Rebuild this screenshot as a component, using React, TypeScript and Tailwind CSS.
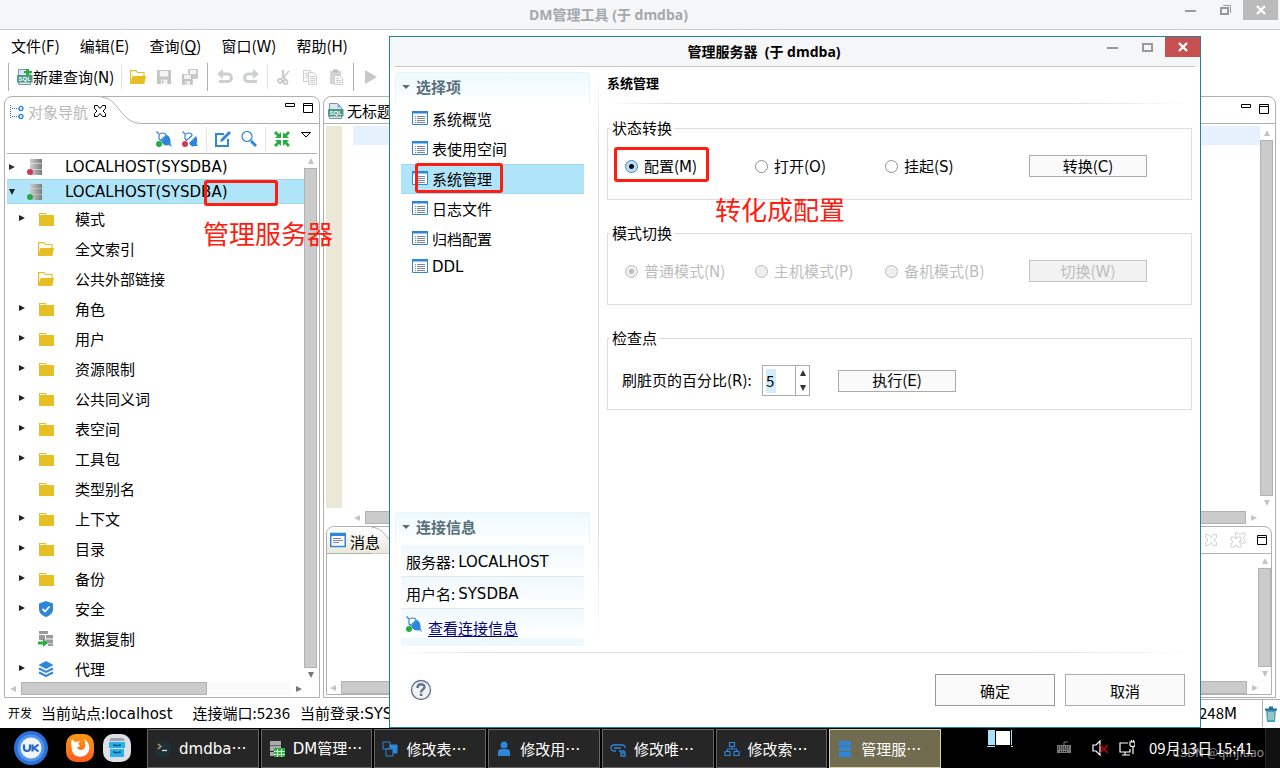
import React from 'react';
import clsx from 'clsx';

const CJK = "font-['Noto_Sans_CJK_SC',sans-serif]";
const LATIN = "font-['DejaVu_Sans',sans-serif]";

// Chinese runs keep the CJK face for digits and brackets, letters use DejaVu
const T: React.FC<{ children: string }> = ({ children }) => (
  <span className="whitespace-nowrap">
    {children.split(/([A-Za-z]+)/).map((part, i) =>
      i % 2 ? (
        <span key={i} className={LATIN}>
          {part}
        </span>
      ) : (
        part
      ),
    )}
  </span>
);

/* ---------- icons ---------- */

const Folder = () => (
  <svg className="size-4 shrink-0" viewBox="0 0 16 16">
    <path d="M1 2h7v2h8v11H1z" fill="#e6bf25" />
    <path d="M2 3h5v1H2z" fill="#fff" />
  </svg>
);

const FolderOpen = () => (
  <svg className="size-4 shrink-0" viewBox="0 0 16 16">
    <path d="M.6 14V1.6H6L7.4 3.5H14V8" fill="none" stroke="#e6bf25" strokeWidth="1.2" />
    <path d="M2.5 7H16l-1.6 8H0z" fill="#e6bf25" />
  </svg>
);

const Server: React.FC<{ color: string }> = ({ color }) => (
  <svg className="size-4 shrink-0" viewBox="0 0 16 16">
    <defs>
      <linearGradient id="metal">
        <stop offset="0" stopColor="#cfcfcf" />
        <stop offset="1" stopColor="#7d7d7d" />
      </linearGradient>
    </defs>
    <path d="M3 0h12v4.500H3zM3 5h12v5H3zM3 10.500h12V16H3z" fill="url(#metal)" />
    <circle cx="3" cy="13" r="3" fill={color} />
  </svg>
);

const Shield = () => (
  <svg className="size-4 shrink-0" viewBox="0 0 16 16">
    <path d="M8 0l7 2.500V8c0 4-3 6.500-7 8-4-1.500-7-4-7-8V2.500z" fill="#2d86d9" />
    <path d="M4.500 8l2.500 2.500 4.500-5" fill="none" stroke="#fff" strokeWidth="1.800" />
  </svg>
);

const Replicate = () => (
  <svg className="size-4 shrink-0" viewBox="0 0 16 16">
    <path d="M1 0h9v3H1zM1 4h6v5H1zM8 4h7v3.500H8zM7 8.500h8V12H9zM10 12.500h5V15h-5z" fill="#9a9a9a" />
    <path d="M0 10.500h5V8l5 4-5 4v-2.500H0z" fill="#27ad3d" />
  </svg>
);

const Layers = () => (
  <svg className="size-4 shrink-0" viewBox="0 0 16 16">
    <path d="M8 0l7.500 4L8 8 .5 4z" fill="#2d86d9" />
    <path d="M1 7.500l7 3.500 7-3.500M1 11.500L8 15l7-3.500" fill="none" stroke="#2d86d9" strokeWidth="2" />
  </svg>
);

const Plug: React.FC<{ dot: string; off?: boolean }> = ({ dot, off }) => (
  <svg className="size-4 shrink-0" viewBox="0 0 16 16">
    <path d="M.5.5L3 3" stroke="#2d86d9" strokeWidth="1.200" />
    <path d="M3 8V4.500C3 3 5 2 6.500 2c2 0 3.500 1 3.500 2.500L4.500 9.500z" fill="#fff" stroke="#2d86d9" strokeWidth="1.200" />
    {off ? (
      <>
        <path d="M6.500 7.500l3-2.500" stroke="#2d86d9" />
        <path d="M7 12l7-7c1.500 2.500 1.500 6 .5 8l1.500 2h-3c-2 1-5 0-6-3z" fill="#2d86d9" />
      </>
    ) : (
      <path d="M5 10l6-6c2.500 1.500 4 4 3.500 8.500L16 16l-3-2c-3 1-6 .500-8-4z" fill="#2d86d9" />
    )}
    <circle cx="3" cy="13" r="3" fill={dot} />
  </svg>
);

const SqlFile: React.FC<{ plus?: boolean }> = ({ plus }) => (
  <svg className="size-4 shrink-0" viewBox="0 0 16 16">
    <path d="M1.500.500h8l4 4v11h-12z" fill="#dbe6f3" stroke="#7f93ab" />
    <path d="M9.500.500v4h4z" fill="#8fa9cf" />
    <path d="M0 6h15.500v7.500H0z" fill="#4e9a86" />
    <text x="1.500" y="12" fontSize="6" fontWeight="700" fill="#fff" fontFamily="Liberation Sans">
      SQL
    </text>
    {plus && <path d="M9 0h3v2h3v2h-3v2H9V4H7V2h2z" fill="#27ad3d" />}
  </svg>
);

const Save: React.FC<{ all?: boolean }> = ({ all }) => (
  <svg className="size-4" viewBox="0 0 16 16">
    {all && (
      <>
        <path d="M6 0h10v10H6z" fill="#cbcbcb" />
        <path d="M8 1h6v4H8z" fill="#f4f4f4" />
      </>
    )}
    <g transform={all ? 'translate(0 5) scale(.72)' : 'translate(1 1) scale(.94)'}>
      <path d="M0 0h15v15H0z" fill="#c4c4c4" />
      <path d="M3 1h9v6H3zM4 10h7v5H4z" fill="#f4f4f4" />
      <path d="M5 11h2v3H5z" fill="#c4c4c4" />
    </g>
  </svg>
);

const UndoArrow: React.FC<{ flip?: boolean }> = ({ flip }) => (
  <svg className={clsx('size-4', flip && '-scale-x-100')} viewBox="0 0 16 16" fill="none">
    <path d="M5 5h6c4.500 0 4.500 7.500 0 7.500H2" stroke="#cdd0d0" strokeWidth="3" />
    <path d="M0 5l6-5v10z" fill="#cdd0d0" />
  </svg>
);

const Cut = () => (
  <svg className="size-4" viewBox="0 0 16 16" fill="none" stroke="#c9c9c9">
    <path d="M7 1v7l3 3" strokeWidth="2" />
    <path d="M13 2L8 8l-3 2" strokeWidth="1.500" />
    <circle cx="4" cy="12" r="2" strokeWidth="1.800" />
    <circle cx="9.500" cy="13" r="2" strokeWidth="1.800" />
  </svg>
);

const CopyPages = () => (
  <svg className="size-4" viewBox="0 0 16 16" fill="#fafafa" stroke="#cfcfcf">
    <path d="M1.500 1.500h7v11h-7z" />
    <path d="M6.500 3.500h5l3 3v9h-8z" />
    <path d="M3 4.500h3M3 6.500h3M3 8.500h3M8 7.500h5M8 9.500h5M8 11.500h5M8 13.500h5" />
  </svg>
);

const Paste = () => (
  <svg className="size-4" viewBox="0 0 16 16">
    <path d="M2 2h11v13H2z" fill="#d3d3d3" />
    <path d="M5 .500h5v3H5z" fill="#bdbdbd" />
    <path d="M6.500 6.500h5l3 3v6h-8z" fill="#fafafa" stroke="#cfcfcf" />
    <path d="M8 9.500h3M8 11.500h5M8 13.500h5" stroke="#cfcfcf" />
  </svg>
);

const NavTree = () => (
  <svg className="size-4 shrink-0" viewBox="0 0 16 16">
    <path d="M1.500 1v14M3 4.500h7M3 12.500h7" fill="none" stroke="#2d6fb5" strokeDasharray="1 1" />
    <circle cx="12" cy="4.500" r="2" fill="none" stroke="#2d86d9" strokeWidth="1.300" />
    <circle cx="12" cy="12.500" r="2" fill="none" stroke="#2d86d9" strokeWidth="1.300" />
  </svg>
);

const ListIcon = () => (
  <svg className="mb-0.5 size-4 shrink-0" viewBox="0 0 16 16">
    <path d="M.5 1.500h15v13H.5z" fill="#fff" stroke="#2d86d9" />
    <path d="M0 1h16v2.500H0z" fill="#2d86d9" />
    <path d="M3 6.500h1M5 6.500h8M3 8.500h1M5 8.500h8M3 10.500h1M5 10.500h8M3 12.500h1M5 12.500h8" stroke="#7c879b" />
  </svg>
);

const MessageIcon = () => (
  <svg className="mb-1 size-4 shrink-0" viewBox="0 0 16 16">
    <path d="M.75 1.500h14.500v13H.75z" fill="#fff" stroke="#2d86d9" strokeWidth="1.500" />
    <path d="M0 1h16v3H0z" fill="#2d86d9" />
    <path d="M3 6.500h8M3 8.500h10M3 10.500h6" stroke="#7c879b" />
  </svg>
);

const CloseOutline: React.FC<{ className?: string }> = ({ className }) => (
  <svg className={clsx('size-3.5', className)} viewBox="0 0 14 14" fill="#fff" stroke="currentColor">
    <path d="M1.500 1.500h3L7 4.500l2.500-3h3v3L10 7l2.500 2.500v3h-3L7 9.500l-2.500 3h-3v-3L4 7 1.500 4.500z" />
  </svg>
);

const Tri: React.FC<{ dir: 'up' | 'down' | 'left' | 'right'; className?: string }> = ({ dir, className }) => {
  const paths = {
    up: 'M4 1l3 6H1z',
    down: 'M1 1h6L4 7z',
    left: 'M7 1v6L1 4z',
    right: 'M1 1l6 3-6 3z',
  };
  return (
    <svg className={clsx('size-2 shrink-0', className)} viewBox="0 0 8 8">
      <path d={paths[dir]} fill="currentColor" />
    </svg>
  );
};

const MinMax: React.FC<{ min?: boolean }> = ({ min = true }) => (
  <svg className="h-3 w-8 shrink-0" viewBox="0 0 32 12" fill="none" stroke="#000">
    {min && <path d="M1.500 1.500h9v3h-9z" />}
    <path d="M19.500 1.500h9v9h-9zM19.500 3.500h9" />
  </svg>
);

const CrossIcon = () => (
  <svg className="size-2.5" viewBox="0 0 10 10">
    <path d="M1 1l8 8M9 1L1 9" stroke="#fff" strokeWidth="2.400" />
  </svg>
);

/* ---------- scroll bars ---------- */

const VScroll: React.FC<{ down?: string }> = ({ down = 'text-[#c4c4c4]' }) => (
  <div className="flex w-[13px] shrink-0 flex-col items-center">
    <Tri dir="up" className="my-[3px] text-[#c4c4c4]" />
    <div className="w-full flex-1 border border-[#b2b2b2] bg-[#cbcbcb]" />
    <Tri dir="down" className={clsx('my-[3px]', down)} />
  </div>
);

const HScroll: React.FC<{ thumb?: string; right?: string }> = ({ thumb = 'w-full', right = 'text-[#c4c4c4]' }) => (
  <div className="flex h-[13px] shrink-0 items-center gap-1">
    <Tri dir="left" className="text-[#c4c4c4]" />
    <div className="flex h-full flex-1 bg-[#fafafa]">
      <div className={clsx('h-full border border-[#b2b2b2] bg-[#cbcbcb]', thumb)} />
    </div>
    <Tri dir="right" className={right} />
  </div>
);

/* ---------- main window ---------- */

const TitleBar = () => (
  <header className="flex h-[30px] shrink-0 items-start border-b border-[#c9c9c9] bg-[#f5f6f7] text-[#a5a8aa]">
    <div className="w-9" />
    <h1 className="flex-1 text-center font-['Open_Sans','Noto_Sans_CJK_SC',sans-serif] text-[14px] leading-[30px] font-bold">
      DM管理工具 (于 dmdba)
    </h1>
    <svg className="mt-1 h-3 w-[62px]" viewBox="0 0 62 12" fill="none" stroke="#999">
      <path d="M4 7h11" strokeWidth="2" />
      <path d="M40 4h7v6h-7z" strokeWidth="2" />
      <path d="M42 1.500h7.500V9" />
    </svg>
    <button aria-label="关闭" className="mr-0.5 flex h-5 w-[35px] items-center justify-center bg-[#bababa]">
      <CrossIcon />
    </button>
  </header>
);

const MenuBar = () => (
  <nav className="flex h-8 shrink-0 items-center gap-5 pl-[11px]">
    <button><T>文件(F)</T></button>
    <button><T>编辑(E)</T></button>
    <button>查询(<u className={clsx(LATIN, 'underline-offset-2')}>Q</u>)</button>
    <button><T>窗口(W)</T></button>
    <button><T>帮助(H)</T></button>
  </nav>
);

const ToolButton: React.FC<{ label: string; children: React.ReactNode }> = ({ label, children }) => (
  <button aria-label={label} className="flex h-6 w-[26px] shrink-0 items-center justify-center text-[#c4c4c4]">
    {children}
  </button>
);

const Bar = () => <div className="mx-1 h-7 w-px shrink-0 bg-[#b0b0b0]" />;
const Sep = () => <div className="mx-[3px] h-6 w-px shrink-0 bg-[#e2e2e2]" />;

const ToolBar = () => (
  <div className="flex h-[34px] shrink-0 items-center pb-1 pl-1">
    <Bar />
    <button className="mr-1 ml-1 flex h-6 items-center">
      <SqlFile plus />
      <T>新建查询(N)</T>
    </button>
    <Sep />
    <ToolButton label="打开"><FolderOpen /></ToolButton>
    <ToolButton label="保存"><Save /></ToolButton>
    <ToolButton label="全部保存"><Save all /></ToolButton>
    <Bar />
    <ToolButton label="撤销"><UndoArrow /></ToolButton>
    <ToolButton label="重做"><UndoArrow flip /></ToolButton>
    <Sep />
    <ToolButton label="剪切"><Cut /></ToolButton>
    <ToolButton label="复制"><CopyPages /></ToolButton>
    <ToolButton label="粘贴"><Paste /></ToolButton>
    <Bar />
    <ToolButton label="执行">
      <svg className="size-4" viewBox="0 0 16 16"><path d="M2 1l12 7-12 7z" fill="#c4c9c6" /></svg>
    </ToolButton>
  </div>
);

const treeItems = [
  { name: '模式', arrow: true, icon: <Folder /> },
  { name: '全文索引', arrow: false, icon: <FolderOpen /> },
  { name: '公共外部链接', arrow: false, icon: <FolderOpen /> },
  { name: '角色', arrow: true, icon: <Folder /> },
  { name: '用户', arrow: true, icon: <Folder /> },
  { name: '资源限制', arrow: true, icon: <Folder /> },
  { name: '公共同义词', arrow: true, icon: <Folder /> },
  { name: '表空间', arrow: true, icon: <Folder /> },
  { name: '工具包', arrow: true, icon: <Folder /> },
  { name: '类型别名', arrow: false, icon: <Folder /> },
  { name: '上下文', arrow: true, icon: <Folder /> },
  { name: '目录', arrow: true, icon: <Folder /> },
  { name: '备份', arrow: true, icon: <Folder /> },
  { name: '安全', arrow: true, icon: <Shield /> },
  { name: '数据复制', arrow: false, icon: <Replicate /> },
  { name: '代理', arrow: true, icon: <Layers /> },
];

const Navigator = () => (
  <aside className="flex w-[316px] shrink-0 flex-col rounded-t-lg border border-[#b0b0b0]">
    <div className="flex h-[27px] shrink-0">
      <div className="flex w-[97px] items-center gap-[3px] pt-0.5 pl-1 whitespace-nowrap text-[#b9b9b9]">
        <NavTree />
        对象导航
        <CloseOutline className="mb-0.5 ml-0.5 size-3 shrink-0 text-black" />
      </div>
      <svg className="h-[27px] w-11 shrink-0" viewBox="0 0 44 27" fill="none" stroke="#b0b0b0">
        <path d="M0 .5C16 0 18 26.500 40 26.500h4" />
      </svg>
      <div className="flex flex-1 justify-end border-b border-[#b0b0b0] pt-[5px] pr-[3px]">
        <MinMax />
      </div>
    </div>
    <div className="mx-0.5 flex h-[30px] shrink-0 items-center justify-end border-b border-[#b0b0b0]">
      <ToolButton label="连接"><Plug dot="#27ad3d" /></ToolButton>
      <ToolButton label="断开"><Plug dot="#d03a4e" off /></ToolButton>
      <Sep />
      <ToolButton label="编辑">
        <svg className="size-4" viewBox="0 0 16 16" fill="none" stroke="#2d86d9">
          <path d="M9 3H1v12h12V8" strokeWidth="2" />
          <path d="M5 11l1-3 8-8 2 2-8 8z" fill="#2d86d9" stroke="none" />
        </svg>
      </ToolButton>
      <ToolButton label="查找">
        <svg className="size-4" viewBox="0 0 16 16" fill="none" stroke="#2d86d9">
          <circle cx="6" cy="5.500" r="5" strokeWidth="1.200" />
          <path d="M10 10l5 5" strokeWidth="2.800" />
        </svg>
      </ToolButton>
      <Sep />
      <ToolButton label="折叠">
        <svg className="size-4" viewBox="0 0 16 16" fill="#27ad3d">
          <path d="M7 7H1l2-2-3-3 2-2 3 3 2-2zM9 7V1l2 2 3-3 2 2-3 3 2 2zM7 9v6l-2-2-3 3-2-2 3-3-2-2zM9 9h6l-2 2 3 3-2 2-3-3-2 2z" />
        </svg>
      </ToolButton>
      <button aria-label="菜单" className="flex w-[22px] justify-center pb-2">
        <svg className="h-1.5 w-2.5" viewBox="0 0 10 6" fill="#fff" stroke="#000"><path d="M.5.5h9L5 5z" /></svg>
      </button>
    </div>
    <div className="ml-0.5 flex min-h-0 flex-1 pr-0.5">
      <ul className="min-w-0 flex-1 overflow-hidden">
        <li className="flex h-[25px] items-center pl-px">
          <Tri dir="right" className="text-[#333]" />
          <span className="mr-[22px] ml-[11px]"><Server color="#d03a4e" /></span>
          <span className={LATIN}>LOCALHOST(SYSDBA)</span>
        </li>
        <li className="flex h-[25px] items-center border-y border-[#9fdcf2] bg-[#b0e5f9] pl-px">
          <Tri dir="down" className="text-[#222]" />
          <span className="mr-[22px] ml-[11px]"><Server color="#27ad3d" /></span>
          <span className={LATIN}>LOCALHOST(SYSDBA)</span>
        </li>
        {treeItems.map(item => (
          <li key={item.name} className="flex h-[30px] items-center pl-[11px]">
            <Tri dir="right" className={clsx('mb-0.5 text-[#222]', !item.arrow && 'invisible')} />
            <span className="mr-[21px] ml-3">{item.icon}</span>
            {item.name}
          </li>
        ))}
      </ul>
      <VScroll down="text-[#777]" />
    </div>
    <div className="mb-0.5 pr-4 pl-1"><HScroll thumb="w-[186px]" right="text-[#777]" /></div>
  </aside>
);

const Editor = () => (
  <main className="flex min-w-0 flex-1 flex-col rounded-t-lg border border-[#b0b0b0]">
    <div className="flex h-[27px] shrink-0 items-center gap-[3px] border-b border-[#b0b0b0] pt-0.5 pr-[3px] pl-1 whitespace-nowrap">
      <SqlFile />
      <span className="flex-1">无标题</span>
      <span className="pb-1"><MinMax /></span>
    </div>
    <div className="flex min-h-0 flex-1 pt-0.5 pr-0.5 pl-0.5">
      <div className="flex min-w-0 flex-1 flex-col">
        <div className="flex flex-1">
          <div className="w-4 bg-[#ebe8d8]" />
          <div className="ml-[11px] h-[19px] flex-1 bg-[#e7f1fe]" />
        </div>
        <div className="mt-[3px] mr-0.5 mb-0.5 pl-[27px]"><HScroll /></div>
      </div>
      <div className="flex pb-4"><VScroll /></div>
    </div>
    <section className="mr-[3px] mb-0.5 ml-0.5 flex h-[169px] shrink-0 flex-col rounded-t-lg border border-[#b0b0b0]">
      <div className="flex h-[27px] shrink-0 border-b border-[#b0b0b0]">
        <div className="relative z-10 flex w-[45px] items-center gap-1 rounded-tl-lg bg-linear-to-b from-white to-[#ebe8d8] pt-1 pl-[3px] whitespace-nowrap">
          <MessageIcon />
          消息
        </div>
        <svg className="h-[27px] w-11 shrink-0" viewBox="0 0 44 27">
          <defs>
            <linearGradient id="tab" x2="0" y2="1">
              <stop offset="0" stopColor="#fff" />
              <stop offset="1" stopColor="#ebe8d8" />
            </linearGradient>
          </defs>
          <path d="M0 .5C16 0 18 26.500 40 26.500H0z" fill="url(#tab)" />
          <path d="M0 .5C16 0 18 26.500 40 26.500h4" fill="none" stroke="#b0b0b0" />
        </svg>
        <div className="flex flex-1 items-center justify-end gap-3 pr-px text-[#d0d0d0]">
          <CloseOutline />
          <svg className="size-4" viewBox="0 0 16 16" fill="#fff" stroke="currentColor">
            <path d="M5 1h3l2 2 2-2h3v3l-2 2 2 2v3h-3L9 8 6 6z" />
            <path d="M1 5h3l2 2 2-2h3v3L9 10l2 2v3H8l-2-2-2 2H1v-3l2-2-2-2z" />
          </svg>
          <span className="-ml-5"><MinMax min={false} /></span>
        </div>
      </div>
      <div className="flex min-h-0 flex-1 flex-col">
        <div className="flex min-h-0 flex-1 justify-end"><VScroll /></div>
        <div className="mr-3 ml-0.5"><HScroll /></div>
      </div>
    </section>
  </main>
);

const StatusBar = () => (
  <footer className="flex h-[30px] shrink-0 items-center pl-2 whitespace-nowrap">
    <span className="mr-[9px] text-[12px]">开发</span>
    <span className="mr-5"><T>当前站点:localhost</T></span>
    <span className="mr-2.5">连接端口:5236</span>
    <T>当前登录:SYSDBA</T>
    <div className="ml-auto flex h-7 items-center border-t border-[#b0b0b0]">
      <span className="w-[63px]"><T>248M</T></span>
      <span className="h-full w-px bg-[#b0b0b0]" />
      <svg className="mr-0.5 ml-px h-4 w-3.5" viewBox="0 0 14 16">
        <path d="M2 4h10l-1 12H3z" fill="#4fa3b8" />
        <path d="M5 6v8M7 6v8M9 6v8" stroke="#d6efcf" />
        <path d="M1 3.500h12M5 1.500h4" stroke="#1f6f9a" strokeWidth="2" />
      </svg>
    </div>
  </footer>
);

/* ---------- dialog ---------- */

const pages = ['系统概览', '表使用空间', '系统管理', '日志文件', '归档配置', 'DDL'];

const SectionHeader: React.FC<{ title: string }> = ({ title }) => (
  <h3 className="flex h-8 items-center gap-1.5 rounded-t border border-b-0 border-[#e2f6fb] bg-linear-to-b from-[#eefaff] to-white pb-1 pl-1.5 font-bold text-[#58707a]">
    <svg className="h-1 w-2" viewBox="0 0 8 4"><path d="M0 0h8L4 4z" fill="#58707a" /></svg>
    {title}
  </h3>
);

const FadeLine: React.FC<{ className?: string }> = ({ className }) => (
  <div className={clsx('h-px bg-[linear-gradient(90deg,transparent,#dedede_12%,#dedede_80%,transparent)]', className)} />
);

const PushButton: React.FC<{ label: string; disabled?: boolean; className?: string }> = ({
  label,
  disabled,
  className,
}) => (
  <button
    disabled={disabled}
    className={clsx(
      'flex h-[22px] w-[118px] items-center justify-center border border-[#ababab] bg-[#fafafa] disabled:border-[#c4c4c4] disabled:bg-[#f2f2f2] disabled:text-[#bdbdbd]',
      className,
    )}
  >
    <T>{label}</T>
  </button>
);

const RadioRow: React.FC<{ name: string; options: string[]; action: string; disabled?: boolean }> = ({
  name,
  options,
  action,
  disabled,
}) => (
  <div className="flex h-[22px] items-center pl-[15px]">
    {options.map((option, i) => (
      <label key={option} className={clsx('flex w-[130px] shrink-0 items-center gap-1.5', disabled && 'text-[#bdbdbd]')}>
        <input
          type="radio"
          name={name}
          defaultChecked={i === 0}
          disabled={disabled}
          className="size-[13px] shrink-0 appearance-none rounded-full border border-[#8f8f8f] bg-white checked:border-[#4a86c0] checked:bg-[radial-gradient(circle,#111_0_2px,#bddcf8_3px)] disabled:border-[#bdbdbd] disabled:bg-[#eee] disabled:checked:bg-[radial-gradient(circle,#bdbdbd_0_2px,#eee_3px)]"
        />
        <T>{option}</T>
      </label>
    ))}
    <PushButton label={action} disabled={disabled} className="ml-3.5" />
  </div>
);

const Group: React.FC<{ title: string; children: React.ReactNode }> = ({ title, children }) => (
  <fieldset className="mb-[23px] h-[82px] border border-[#dcdcdc] px-0.5">
    <legend className="px-0.5 leading-5">{title}</legend>
    <div className="pt-[17px]">{children}</div>
  </fieldset>
);

const ServerDialog = () => (
  <div
    role="dialog"
    aria-labelledby="dialog-title"
    className="absolute top-9 bottom-10 left-[389px] flex w-[812px] flex-col border border-[#2a7e98] bg-white"
  >
    <div className="flex h-[30px] shrink-0 items-start bg-[#f5f6f7]">
      <div className="ml-[5px] flex h-[30px] flex-1 border-b border-[#c9c9c9]">
        <h2
          id="dialog-title"
          className="flex-1 pl-[30px] text-center font-['Open_Sans','Noto_Sans_CJK_SC',sans-serif] text-[14px] leading-[30px] font-bold whitespace-pre"
        >
          管理服务器  (于 dmdba)
        </h2>
        <svg className="mt-1 h-3 w-[62px]" viewBox="0 0 62 12" fill="none" stroke="#999" strokeWidth="2">
          <path d="M4 7h11M40 3h9v7h-9z" />
        </svg>
      </div>
      <div className="mr-[5px] h-[30px] w-[30px] border-b border-[#c9c9c9]">
        <button aria-label="关闭" className="flex h-5 w-[35px] items-center justify-center bg-[#c75050]">
          <CrossIcon />
        </button>
      </div>
    </div>

    <div className="flex flex-1">
      <div className="flex w-[200px] shrink-0 flex-col pt-[5px] pb-1.5 pl-[5px]">
        <SectionHeader title="选择项" />
        <ul className="mr-1.5 ml-1.5">
          {pages.map(page => (
            <li
              key={page}
              className={clsx(
                'flex items-center gap-1 border-y pl-[11px]',
                page === 'DDL' ? 'h-[25px]' : 'h-[30px]',
                page === '系统管理' ? 'border-[#9fdcf2] bg-[#b0e5f9]' : 'border-transparent',
              )}
            >
              <ListIcon />
              <T>{page}</T>
            </li>
          ))}
        </ul>
        <div className="mt-auto">
          <SectionHeader title="连接信息" />
          <div className="mx-1.5 mt-px">
            <p className="flex h-8 items-center gap-[3px] border-b border-[#e4e9ec] bg-linear-to-b from-[#f0f9fe] to-white pt-0.5 pl-[5px]">
              服务器: <span className={LATIN}>LOCALHOST</span>
            </p>
            <p className="flex h-8 items-center gap-[3px] border-b border-[#e4e9ec] bg-linear-to-b from-[#f0f9fe] to-white pt-0.5 pl-[5px]">
              用户名: <span className={LATIN}>SYSDBA</span>
            </p>
            <p className="flex h-[37px] items-center gap-1.5 border-b-8 border-[#eef9fe] bg-linear-to-b from-[#f0f9fe] to-white pl-[5px]">
              <Plug dot="#27ad3d" />
              <a href="#connection" className="pt-2 text-[#00007f] underline underline-offset-2">
                查看连接信息
              </a>
            </p>
          </div>
        </div>
      </div>

      <div className="mt-[5px] mb-1.5 ml-2 w-px bg-[linear-gradient(transparent,#dedede_12%,#dedede_80%,transparent)]" />

      <div className="flex-1 px-2">
        <h3 className="mb-1 h-8 text-[13px] leading-8 font-bold">系统管理</h3>
        <FadeLine className="mb-3.5" />
        <Group title="状态转换">
          <RadioRow name="state" options={['配置(M)', '打开(O)', '挂起(S)']} action="转换(C)" />
        </Group>
        <Group title="模式切换">
          <RadioRow name="mode" options={['普通模式(N)', '主机模式(P)', '备机模式(B)']} action="切换(W)" disabled />
        </Group>
        <Group title="检查点">
          <div className="flex items-center pl-3">
            <label htmlFor="percent" className="w-[140px] shrink-0"><T>刷脏页的百分比(R):</T></label>
            <div className="flex h-[31px] w-12 border border-[#ababab]">
              <div className="flex flex-1 items-center border-r border-[#ababab] pl-[3px]">
                <input id="percent" defaultValue="5" className="h-6 w-2.5 bg-[#d3ecfb] outline-none" />
              </div>
              <div className="flex w-[13px] flex-col text-[#333]">
                <button aria-label="增加" className="flex flex-1 items-center justify-center"><Tri dir="up" /></button>
                <button aria-label="减少" className="flex flex-1 items-center justify-center"><Tri dir="down" /></button>
              </div>
            </div>
            <PushButton label="执行(E)" className="ml-7" />
          </div>
        </Group>
      </div>
    </div>

    <FadeLine className="mx-[5px]" />
    <div className="flex h-[74px] shrink-0 items-center gap-2.5 pr-[15px] pl-5">
      <button aria-label="帮助" className="mr-auto">
        <svg className="size-[22px]" viewBox="0 0 22 22" fill="none" stroke="#66738f">
          <circle cx="11" cy="11" r="9.500" fill="#f1f2f6" strokeWidth="1.400" />
          <path d="M7.500 9c0-5 7-4.500 7-1 0 2.500-3.500 2.500-3.500 5.500" strokeWidth="2.400" />
          <path d="M9.800 15.800h2.600" strokeWidth="2.400" />
        </svg>
      </button>
      <button className="h-8 w-[120px] border border-[#999] bg-[#fafafa] pt-0.5">确定</button>
      <button className="h-8 w-[120px] border border-[#ababab] bg-[#fafafa] pt-0.5">取消</button>
    </div>
  </div>
);

/* ---------- task bar ---------- */

const tasks = [
  {
    name: 'dmdba…',
    icon: (
      <svg className="size-4 shrink-0" viewBox="0 0 16 16">
        <rect width="16" height="16" rx="5" fill="#1c3038" />
        <path d="M3 3l3 2.500L3 8" fill="none" stroke="#e8924a" strokeWidth="1.300" />
        <path d="M7 9.500h5" stroke="#ddd" strokeWidth="1.300" />
      </svg>
    ),
  },
  {
    name: 'DM管理…',
    icon: (
      <svg className="size-4 shrink-0" viewBox="0 0 16 16">
        <path d="M1 0h11v4.500H1zM1 5h11v5H1zM1 11h5v4H1z" fill="#aaa" />
        <path d="M5 7h11v9H5z" fill="#27ad3d" />
        <path d="M5 10.500h11M5 13.500h11M8.500 8v8M12.500 8v8" stroke="#d9f2dd" />
      </svg>
    ),
  },
  {
    name: '修改表…',
    icon: (
      <svg className="size-4 shrink-0" viewBox="0 0 16 16" fill="none" stroke="#2d86d9">
        <path d="M1 1h7v7H1z" />
        <path d="M8 4h7v8H8z" fill="#2d86d9" />
        <path d="M4 8h7v7H4z" fill="#262626" />
      </svg>
    ),
  },
  {
    name: '修改用…',
    icon: (
      <svg className="size-4 shrink-0" viewBox="0 0 16 16" fill="#2d86d9">
        <circle cx="8" cy="4" r="3.500" />
        <path d="M2 15v-4c0-2 2-3 3-3h6c1 0 3 1 3 3v4z" />
      </svg>
    ),
  },
  {
    name: '修改唯…',
    icon: (
      <svg className="size-4 shrink-0" viewBox="0 0 16 16" fill="none" stroke="#2d86d9" strokeWidth="1.300">
        <path d="M6 10H4C0 10 0 4 4 4h8c2.500 0 3.500 1.500 3 3M4 7h7" />
        <path d="M9 10h4c2 0 2 1 2 5h-4v-3h4" />
      </svg>
    ),
  },
  {
    name: '修改索…',
    icon: (
      <svg className="size-4 shrink-0" viewBox="0 0 16 16" fill="none" stroke="#2d86d9" strokeWidth="1.200">
        <path d="M5.500 1.500h5v4h-5zM1 10.500h5v4H1zM10 10.500h5v4h-5zM8 5.500V8M3.500 10.500V8h9v2.500" />
      </svg>
    ),
  },
  {
    name: '管理服…',
    icon: (
      <svg className="size-4 shrink-0" viewBox="0 0 16 16" fill="#2d86d9">
        <path d="M2 0h12v4.500H2zM2 5.500h12V10H2zM2 11h12v5H2z" />
      </svg>
    ),
  },
];

const TaskBar = () => (
  <div className="flex h-10 shrink-0 items-center bg-black text-white">
    <div className="flex w-[147px] shrink-0 items-center pl-3.5">
      <svg className="mr-[18px] size-[34px]" viewBox="0 0 34 34">
        <circle cx="17" cy="17" r="17" fill="#2c6fd6" />
        <circle cx="17" cy="17" r="13.500" fill="#4f95ee" />
        <circle cx="17" cy="17" r="10.500" fill="#f1f4f8" />
        <path d="M10 13.500v3.500c0 4 6 4 6 0v-3.500M18.500 13.500v7M24.500 13.500l-4.500 3.500 4.500 3.500" fill="none" stroke="#2668c8" strokeWidth="2.200" />
      </svg>
      <svg className="mr-[9px] size-7" viewBox="0 0 28 28">
        <defs>
          <linearGradient id="fox" x2="0" y2="1">
            <stop offset="0" stopColor="#fb9a12" />
            <stop offset="1" stopColor="#ff5a20" />
          </linearGradient>
        </defs>
        <rect width="28" height="28" rx="10" fill="url(#fox)" />
        <path d="M6 5l3 3 5-1-2 3c3 1 2 3-1 3 1 4 7 4 8 0 1-3 0-5-1-8 6 4 7 10 3 15-5 5-14 3-15-4-1-4-1-8 0-11z" fill="#fff" />
      </svg>
      <svg className="size-7" viewBox="0 0 28 28">
        <rect width="28" height="28" rx="10" fill="#dde0e5" />
        <path d="M6 7l2-3h12l2 3z" fill="#9aa2aa" />
        <path d="M6 8h16v6H6zM7 15h14v8H7z" fill="#29b0ee" />
        <path d="M11 10v1.500h6V10M11 17v1.500h6V17" fill="none" stroke="#13547c" strokeWidth="1.300" />
      </svg>
    </div>
    <div className="flex h-full w-[794px] shrink-0 gap-0.5 pt-px">
      {tasks.map((task, i) => (
        <button
          key={task.name}
          className={clsx(
            'flex min-w-0 flex-1 items-center gap-2 border pl-[7px]',
            i === 6 ? 'border-[#d8cfae] bg-[#716b4f]' : 'border-[#666] bg-[#262626]',
          )}
        >
          {task.icon}
          <T>{task.name}</T>
        </button>
      ))}
    </div>
    <svg className="ml-[46px] h-10 w-7 shrink-0" viewBox="0 0 28 40">
      <path d="M1 2h7v15H1z" fill="#abe1f8" />
      <path d="M9 3h14v14H9z" fill="#fff" />
      <path d="M0 18.500h8M24.500 2v15M24 18.500h2" stroke="#abe1f8" />
    </svg>
    <div className="relative ml-auto flex h-full shrink-0 items-center">
      <svg className="mr-5 size-4" viewBox="0 0 16 16">
        <path d="M1 5h14v8H1z" fill="#777" />
        <path d="M8 5V2h4" fill="none" stroke="#777" />
        <path d="M2 7h12M2 9h12M4 11.500h8" stroke="#111" strokeDasharray="1 1" />
      </svg>
      <svg className="mr-2.5 h-4 w-[17px]" viewBox="0 0 17 16" fill="none">
        <path d="M1 5h3l4-4v14l-4-4H1z" stroke="#fff" strokeWidth="1.200" />
        <path d="M8 5l8 8M16 5l-8 8" stroke="#d40000" strokeWidth="1.400" />
      </svg>
      <svg className="mr-3.5 size-4" viewBox="0 0 16 16" fill="none" stroke="#fff" strokeWidth="1.200">
        <path d="M9 3H1v9h10V9M3 15h8M6 12v3M14 7v7M11 2h5v3c0 2-5 2-5 0zM12.500 2V0M14.500 2V0" />
      </svg>
      <time className="mr-[15px] w-[101px] whitespace-nowrap">09月13日 15:41</time>
      <div className="h-full w-[15px] border-l border-[#2a2a2a] bg-[#111]" />
      <span className="absolute right-4 bottom-2 text-[12px] leading-4 whitespace-nowrap text-white/55">CSDN @qinjiuao</span>
    </div>
  </div>
);

/* ---------- red annotations over the windows ---------- */

const Mark: React.FC<{ className: string }> = ({ className }) => (
  <div className={clsx('pointer-events-none absolute z-20 rounded-[3px] border-3 border-[#fe1d10]', className)} />
);

export default function App() {
  return (
    <div
      lang="zh-CN"
      className={clsx('relative flex h-screen flex-col overflow-hidden bg-white text-[15px] leading-5 text-black', CJK)}
    >
      <TitleBar />
      <MenuBar />
      <ToolBar />
      <div className="isolate flex min-h-0 flex-1 gap-[3px] pr-1 pl-1">
        <Navigator />
        <Editor />
      </div>
      <StatusBar />
      <TaskBar />
      <ServerDialog />
      <Mark className="top-[180px] left-[204px] h-[26px] w-[74px]" />
      <Mark className="top-[163px] left-[415px] h-[30px] w-[88px]" />
      <Mark className="top-[147px] left-[614px] h-[35px] w-[95px]" />
      <p className="absolute top-[217px] left-[203px] text-[26px] leading-8 text-[#fe1d10]">管理服务器</p>
      <p className="absolute top-[193px] left-[715px] text-[26px] leading-8 text-[#fe1d10]">转化成配置</p>
    </div>
  );
}
